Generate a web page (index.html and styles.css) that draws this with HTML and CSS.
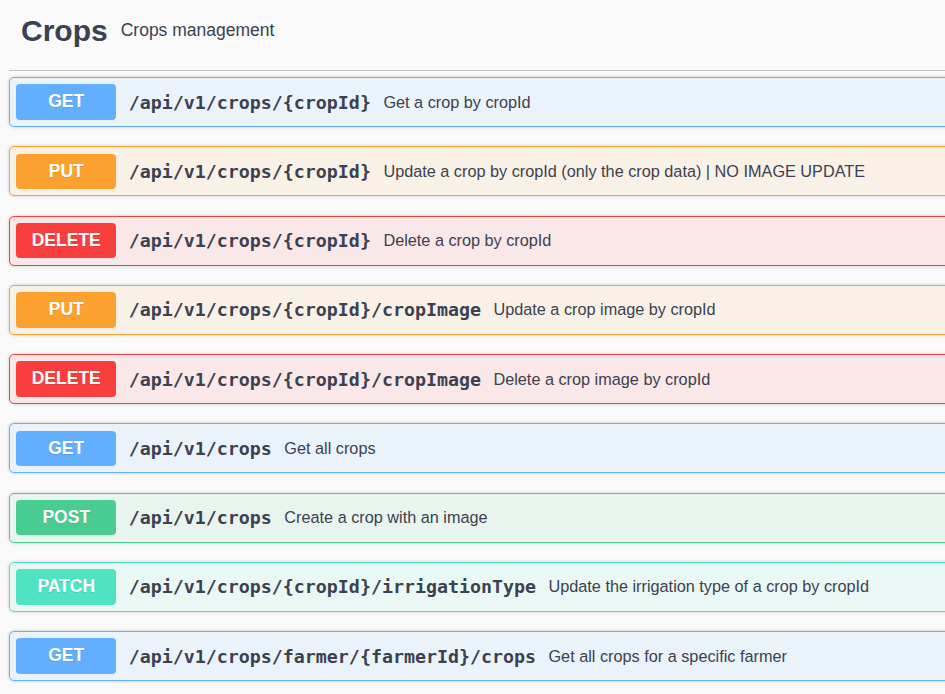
FILE: index.html
```html
<!DOCTYPE html>
<html lang="en">
<head>
<meta charset="utf-8">
<title>Crops</title>
<link rel="stylesheet" href="styles.css">
</head>
<body>
<div class="page">
  <section class="tag-section">
    <h3 class="tag">
      <span class="tag-name">Crops</span>
      <small class="tag-desc">Crops management</small>
    </h3>
    <div class="ops">
      <div class="op op-get"><span class="method">GET</span><span class="path">/api/v1/crops/{cropId}</span><span class="desc">Get a crop by cropId</span></div>
      <div class="op op-put"><span class="method">PUT</span><span class="path">/api/v1/crops/{cropId}</span><span class="desc">Update a crop by cropId (only the crop data) | NO IMAGE UPDATE</span></div>
      <div class="op op-delete"><span class="method">DELETE</span><span class="path">/api/v1/crops/{cropId}</span><span class="desc">Delete a crop by cropId</span></div>
      <div class="op op-put"><span class="method">PUT</span><span class="path">/api/v1/crops/{cropId}/cropImage</span><span class="desc">Update a crop image by cropId</span></div>
      <div class="op op-delete"><span class="method">DELETE</span><span class="path">/api/v1/crops/{cropId}/cropImage</span><span class="desc">Delete a crop image by cropId</span></div>
      <div class="op op-get"><span class="method">GET</span><span class="path">/api/v1/crops</span><span class="desc">Get all crops</span></div>
      <div class="op op-post"><span class="method">POST</span><span class="path">/api/v1/crops</span><span class="desc">Create a crop with an image</span></div>
      <div class="op op-patch"><span class="method">PATCH</span><span class="path">/api/v1/crops/{cropId}/irrigationType</span><span class="desc">Update the irrigation type of a crop by cropId</span></div>
      <div class="op op-get"><span class="method">GET</span><span class="path">/api/v1/crops/farmer/{farmerId}/crops</span><span class="desc">Get all crops for a specific farmer</span></div>
    </div>
  </section>
</div>
</body>
</html>
```

FILE: styles.css
```css
html, body {
  margin: 0;
  padding: 0;
  background: #fafafa;
  overflow: hidden;
}

body {
  font-family: "Liberation Sans", Arial, sans-serif;
  color: #3b4151;
}

.page {
  padding: 0 0 0 9px;
  margin-right: -60px;
}

.tag {
  display: flex;
  align-items: center;
  margin: 0;
  padding: 13px 0 21px 12px;
  border-bottom: 1px solid #c1c3c7;
}

.tag-name {
  font-size: 30px;
  font-weight: bold;
  line-height: 36px;
  color: #3b4151;
}

.tag-desc {
  font-size: 17.5px;
  font-weight: normal;
  padding: 0 12.5px 2px 13px;
  color: #3b4151;
}

.ops {
  padding-top: 6px;
}

.op {
  display: flex;
  align-items: center;
  padding: 6.25px;
  margin-bottom: 19.25px;
  border: 1px solid;
  border-radius: 5px;
  box-shadow: 0 0 3.75px rgba(0, 0, 0, 0.19);
}

.method {
  flex: none;
  width: 100px;
  height: 35.5px;
  line-height: 35.5px;
  text-align: center;
  border-radius: 4px;
  color: #fff;
  font-size: 17.5px;
  font-weight: bold;
  text-shadow: 0 1px 0 rgba(0, 0, 0, 0.1);
}

.path {
  padding: 0 12.5px;
  font-family: "DejaVu Sans Mono", "Liberation Mono", monospace;
  font-weight: bold;
  font-size: 18.3px;
  color: #3b4151;
  white-space: nowrap;
}

.desc {
  font-size: 16.25px;
  color: #3b4151;
  white-space: nowrap;
}

.op-get { background: #ebf3fa; border-color: #61affe; }
.op-get .method { background: #61affe; }

.op-put { background: #faf1e6; border-color: #fca130; }
.op-put .method { background: #fca130; }

.op-delete { background: #fae7e7; border-color: #f93e3e; }
.op-delete .method { background: #f93e3e; }

.op-post { background: #e8f5ef; border-color: #49cc90; }
.op-post .method { background: #49cc90; }

.op-patch { background: #e9f8f4; border-color: #50e3c2; }
.op-patch .method { background: #50e3c2; }
```
